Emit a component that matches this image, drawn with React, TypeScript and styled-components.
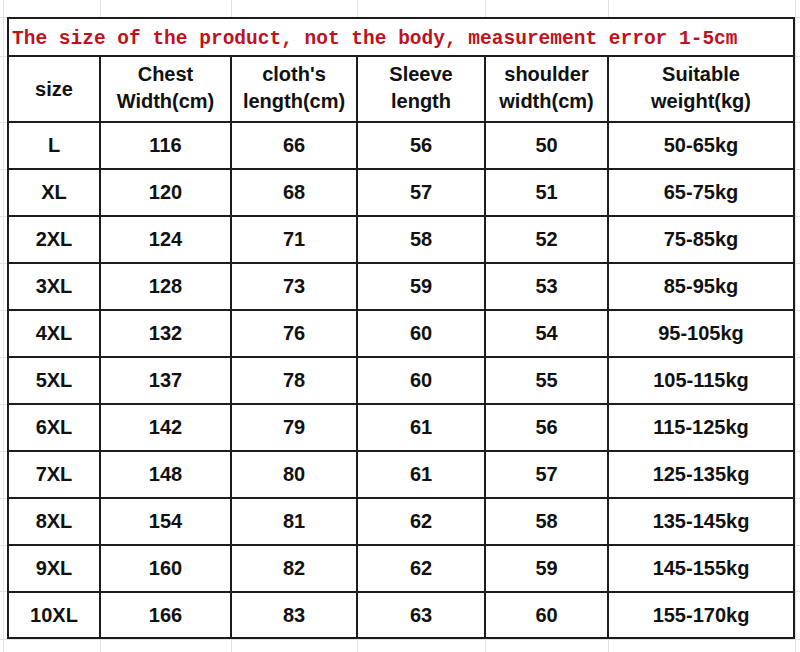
import React from "react";
import styled, { createGlobalStyle } from "styled-components";

// faint spreadsheet gridlines behind the chart (they only show around its edges)
const gridX = [3, 100, 231, 357, 485, 608, 795];
const gridY = [17, 56, 122, 169, 216, 263, 310, 357, 404, 451, 498, 545, 591, 639];

const lineColor = "#e2e2e2";
const sheetLines = [
  ...gridX.map(
    (x) =>
      `linear-gradient(to right, transparent ${x}px, ${lineColor} ${x}px, ${lineColor} ${x + 1}px, transparent ${x + 1}px)`
  ),
  ...gridY.map(
    (y) =>
      `linear-gradient(to bottom, transparent ${y}px, ${lineColor} ${y}px, ${lineColor} ${y + 1}px, transparent ${y + 1}px)`
  ),
].join(", ");

const GlobalStyle = createGlobalStyle`
  html, body {
    margin: 0;
    padding: 0;
    background-color: #ffffff;
  }

  body {
    width: 800px;
    height: 652px;
    overflow: hidden;
    background-image: ${sheetLines};
    font-family: "Liberation Sans", Arial, sans-serif;
  }
`;

const Page = styled.div`
  padding: 17px 0 0 7px;
`;

const Chart = styled.div`
  display: grid;
  grid-template-columns: 90px 129px 124px 126px 121px 184px;
  grid-template-rows: 36px 64px repeat(10, 45px) 44px;
  gap: 2px;
  padding: 2px;
  width: max-content;
  background: #1c1c1c;
`;

const Notice = styled.div`
  grid-column: 1 / -1;
  display: flex;
  align-items: center;
  padding: 3px 0 0 3px;
  background: #ffffff;
  color: #c0121c;
  font-family: "Liberation Mono", "Courier New", monospace;
  font-weight: 700;
  font-size: 19.5px;
  white-space: nowrap;
`;

const Cell = styled.div<{ $head?: boolean; $twoLine?: boolean }>`
  display: flex;
  align-items: center;
  justify-content: center;
  text-align: center;
  background: #ffffff;
  color: #111111;
  font-weight: 700;
  font-size: 20px;
  line-height: ${(p) => (p.$head ? "27px" : "normal")};
  padding-bottom: ${(p) => (p.$twoLine ? "3px" : "0")};
`;

const headers: React.ReactNode[] = [
  "size",
  <>Chest<br />Width(cm)</>,
  <>cloth's<br />length(cm)</>,
  <>Sleeve<br />length</>,
  <>shoulder<br />width(cm)</>,
  <>Suitable<br />weight(kg)</>,
];

const rows: string[][] = [
  ["L", "116", "66", "56", "50", "50-65kg"],
  ["XL", "120", "68", "57", "51", "65-75kg"],
  ["2XL", "124", "71", "58", "52", "75-85kg"],
  ["3XL", "128", "73", "59", "53", "85-95kg"],
  ["4XL", "132", "76", "60", "54", "95-105kg"],
  ["5XL", "137", "78", "60", "55", "105-115kg"],
  ["6XL", "142", "79", "61", "56", "115-125kg"],
  ["7XL", "148", "80", "61", "57", "125-135kg"],
  ["8XL", "154", "81", "62", "58", "135-145kg"],
  ["9XL", "160", "82", "62", "59", "145-155kg"],
  ["10XL", "166", "83", "63", "60", "155-170kg"],
];

export default function App() {
  return (
    <>
      <GlobalStyle />
      <Page>
        <Chart>
          <Notice>The size of the product, not the body, measurement error 1-5cm</Notice>
          {headers.map((h, i) => (
            <Cell $head $twoLine={i > 0} key={`h${i}`}>
              <span>{h}</span>
            </Cell>
          ))}
          {rows.map((row) =>
            row.map((value, i) => <Cell key={`${row[0]}-${i}`}>{value}</Cell>)
          )}
        </Chart>
      </Page>
    </>
  );
}
